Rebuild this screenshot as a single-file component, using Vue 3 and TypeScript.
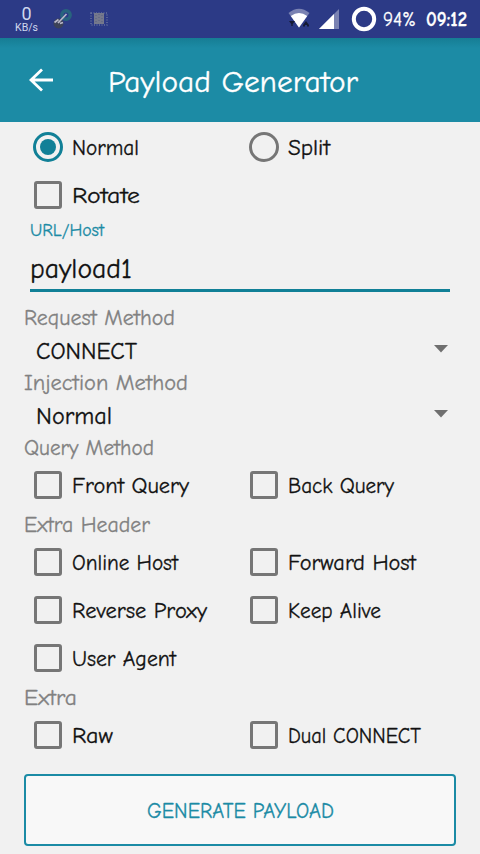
<script setup lang="ts">
import { ref } from 'vue'

interface Option {
  label: string
  width: number
}

interface Group {
  title: string
  width: number
  options: Option[]
}

interface Picker {
  title: string
  titleWidth: number
  value: string
  width: number
}

const mode = ref('Normal')
const host = ref('payload1')
const checked = ref<string[]>([])

const modes: Option[] = [
  { label: 'Normal', width: 67 },
  { label: 'Split', width: 42 },
]

const pickers: Picker[] = [
  { title: 'Request Method', titleWidth: 151, value: 'CONNECT', width: 101 },
  { title: 'Injection Method', titleWidth: 164, value: 'Normal', width: 76 },
]

const groups: Group[] = [
  {
    title: 'Query Method',
    width: 130,
    options: [
      { label: 'Front Query', width: 117 },
      { label: 'Back Query', width: 106 },
    ],
  },
  {
    title: 'Extra Header',
    width: 126,
    options: [
      { label: 'Online Host', width: 106 },
      { label: 'Forward Host', width: 128 },
      { label: 'Reverse Proxy', width: 135 },
      { label: 'Keep Alive', width: 93 },
      { label: 'User Agent', width: 104 },
    ],
  },
  {
    title: 'Extra',
    width: 53,
    options: [
      { label: 'Raw', width: 41 },
      { label: 'Dual CONNECT', width: 133 },
    ],
  },
]

function toggle(label: string) {
  checked.value = checked.value.includes(label)
    ? checked.value.filter((item) => item !== label)
    : [...checked.value, label]
}
</script>

<template>
  <main class="screen">
    <header class="status">
      <div class="speed"><b>0</b><span>KB/s</span></div>
      <svg class="link-icon" width="20" height="22" viewBox="0 0 20 22">
        <circle cx="13" cy="7" r="4.2" fill="none" stroke="#28647e" stroke-width="3.4" />
        <circle cx="5.5" cy="15.5" r="5" fill="#3c4258" />
        <path d="M1.5 14.5l4-3M5 15l8.5-9M7 15.5l3-1" fill="none" stroke="#b9b8ca" stroke-width="1.7" />
      </svg>
      <svg class="chip-icon" width="18" height="14" viewBox="0 0 18 14">
        <rect x="1" y="1" width="16" height="12" fill="none" stroke="#65709e" stroke-width="1.5" stroke-dasharray="1 1.5" />
        <rect x="4" y="1" width="10" height="11" fill="#75798c" />
        <path d="M6 3v8M9 2v9M12 3v8" stroke="#595f83" stroke-dasharray="1 2" />
      </svg>
      <span class="spacer"></span>
      <svg class="wifi-icon" width="22" height="21" viewBox="0 0 22 21">
        <path d="M.5 5Q11-3.5 21.5 5L11 19.5z" fill="#7a82b2" />
        <path d="M2.8 8Q11 1.8 19.2 8L11 19.5z" fill="#fff" />
        <path d="M1 13h6l-3 4zM3.3 16h1.4v2H3.3zM15 17l3-4 3 4zM15 17h2v1.5h-2zM19 17h2v1.5h-2z" fill="#151b35" />
      </svg>
      <svg class="signal-icon" width="20" height="20" viewBox="0 0 20 20">
        <path d="M0 20L20 0v20z" fill="#7a82b2" />
        <path d="M0 20L15 5v15z" fill="#fff" />
      </svg>
      <svg class="battery-icon" width="26" height="26" viewBox="0 0 26 26">
        <circle cx="13" cy="13" r="10.2" fill="none" stroke="#fff" stroke-width="4" />
      </svg>
      <svg class="fit percent" width="34" height="26"><text x="0" y="20" textLength="33" lengthAdjust="spacingAndGlyphs">94%</text></svg>
      <svg class="fit clock" width="42" height="26"><text x="0" y="20" textLength="41" lengthAdjust="spacingAndGlyphs">09:12</text></svg>
    </header>

    <div class="appbar">
      <svg class="back" width="26" height="24" viewBox="0 0 26 24">
        <path d="M24 12H2M13 1.5L2 12l11 10.5" fill="none" stroke="#fff" stroke-width="2.8" />
      </svg>
      <svg class="fit title" width="260" height="42"><text x="0" y="33" textLength="250" lengthAdjust="spacingAndGlyphs">Payload Generator</text></svg>
    </div>

    <section class="form">
      <div class="grid">
        <div v-for="item in modes" :key="item.label" class="option" @click="mode = item.label">
          <span class="radio" :class="{ on: mode === item.label }"></span>
          <svg class="fit option-text" width="160" height="32"><text x="0" y="24" :textLength="item.width" lengthAdjust="spacingAndGlyphs">{{ item.label }}</text></svg>
        </div>
        <div class="option" @click="toggle('Rotate')">
          <span class="box" :class="{ on: checked.includes('Rotate') }"></span>
          <svg class="fit option-text" width="160" height="32"><text x="0" y="24" textLength="68" lengthAdjust="spacingAndGlyphs">Rotate</text></svg>
        </div>
      </div>

      <div class="field">
        <svg class="fit field-label" width="90" height="24"><text x="0" y="17" textLength="74" lengthAdjust="spacingAndGlyphs">URL/Host</text></svg>
        <div class="field-value">
          <svg class="fit" width="200" height="40"><text x="0" y="32" textLength="102" lengthAdjust="spacingAndGlyphs">{{ host }}</text></svg>
        </div>
      </div>

      <template v-for="item in pickers" :key="item.title">
        <svg class="fit caption" width="220" height="29"><text x="0" y="23" :textLength="item.titleWidth" lengthAdjust="spacingAndGlyphs">{{ item.title }}</text></svg>
        <div class="picker">
          <svg class="fit picker-text" width="160" height="36"><text x="0" y="28" :textLength="item.width" lengthAdjust="spacingAndGlyphs">{{ item.value }}</text></svg>
          <svg width="14" height="8" viewBox="0 0 14 8"><path d="M0 0h14L7 7.5z" fill="#6f6f6f" /></svg>
        </div>
      </template>

      <template v-for="group in groups" :key="group.title">
        <svg class="fit caption" width="220" height="29"><text x="0" y="23" :textLength="group.width" lengthAdjust="spacingAndGlyphs">{{ group.title }}</text></svg>
        <div class="grid">
          <div v-for="item in group.options" :key="item.label" class="option" @click="toggle(item.label)">
            <span class="box" :class="{ on: checked.includes(item.label) }"></span>
            <svg class="fit option-text" width="160" height="32"><text x="0" y="24" :textLength="item.width" lengthAdjust="spacingAndGlyphs">{{ item.label }}</text></svg>
          </div>
        </div>
      </template>

      <button class="generate" type="button">
        <svg class="fit" width="187" height="30"><text x="0" y="23" textLength="187" lengthAdjust="spacingAndGlyphs">GENERATE PAYLOAD</text></svg>
      </button>
    </section>
  </main>
</template>

<style>
body {
  background: #f1f1f1;
}
</style>

<style scoped>
.screen {
  width: 480px;
  height: 854px;
  overflow: hidden;
  background: #f1f1f1;
  font-family: "Choco cooky", "Comic Neue", Lato, sans-serif;
}

svg {
  display: block;
  flex: none;
}

.fit {
  overflow: visible;
  fill: currentColor;
  stroke: currentColor;
  stroke-width: 0.3px;
}

.status {
  display: flex;
  align-items: center;
  box-sizing: border-box;
  height: 38px;
  padding: 0 12px 0 15px;
  background: #2c3a86;
  color: #fff;
}

.speed {
  display: flex;
  flex-direction: column;
  align-items: center;
  width: 23px;
  padding-top: 1px;
  color: #d0d8ee;
  font: 10.5px/11px Roboto, sans-serif;
}

.speed b {
  font-size: 18px;
  font-weight: 400;
  line-height: 15px;
}

.speed span {
  padding-top: 1px;
}

.link-icon {
  margin-left: 15px;
}

.chip-icon {
  margin-left: 17px;
}

.spacer {
  flex: 1;
}

.wifi-icon {
  margin: 0 9px 1px 0;
}

.signal-icon {
  margin: 0 12px 1px 0;
}

.battery-icon {
  margin: 0 6px 1px 0;
}

.percent {
  margin-right: 9px;
  font-size: 21px;
}

.clock {
  font-size: 21px;
  font-weight: 700;
}

.appbar {
  display: flex;
  align-items: center;
  box-sizing: border-box;
  height: 84px;
  padding-left: 29px;
  background: linear-gradient(#167d94, #1c8ba5 10px);
  color: #fff;
}

.title {
  margin-left: 53px;
  font-size: 31px;
}

.form {
  padding: 1px 24px 0;
}

.grid {
  display: grid;
  grid-template-columns: 216px 216px;
  grid-auto-rows: 48px;
}

.option {
  display: flex;
  align-items: center;
  padding-left: 9px;
}

.radio,
.box {
  display: flex;
  flex: none;
  align-items: center;
  justify-content: center;
  box-sizing: border-box;
  border: 3px solid #767676;
}

.radio {
  width: 30px;
  height: 30px;
  border-radius: 50%;
}

.radio.on {
  border-color: #118097;
}

.radio.on::after {
  width: 16px;
  height: 16px;
  border-radius: 50%;
  background: #118097;
  content: "";
}

.box {
  width: 28px;
  height: 28px;
  margin: 0 1px;
  border-radius: 3px;
}

.box.on {
  border-color: #118097;
  background: #118097;
}

.option-text {
  margin-left: 9px;
  color: #111;
  font-size: 22.5px;
}

.option .box + .option-text {
  margin-left: 8.5px;
}

.field {
  height: 83px;
  padding: 0 6px;
}

.field-label {
  color: #1b8ba5;
  font-size: 19px;
}

.field-value {
  display: flex;
  align-items: center;
  box-sizing: border-box;
  height: 49px;
  border-bottom: 3px solid #118097;
  color: #111;
  font-size: 28px;
}

.caption {
  color: #818181;
  font-size: 22.5px;
}

.picker {
  display: flex;
  align-items: center;
  justify-content: space-between;
  height: 36px;
  padding: 0 8px 0 12px;
  color: #111;
  font-size: 24px;
}

.generate {
  display: flex;
  align-items: center;
  justify-content: center;
  width: 432px;
  height: 72px;
  margin: 15px 0 0;
  padding: 0;
  border: 2px solid #1b8ba5;
  border-radius: 4px;
  background: #f8f8f8;
  color: #1b8ba5;
  font-family: inherit;
  font-size: 22px;
}
</style>
